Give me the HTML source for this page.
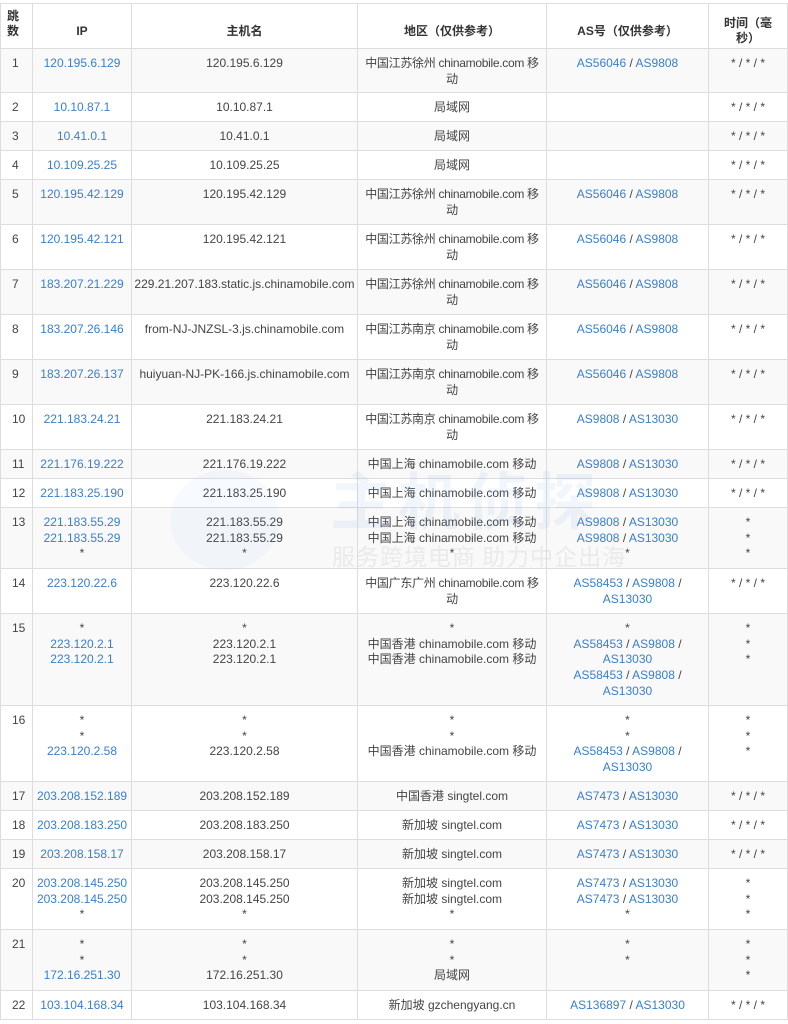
<!DOCTYPE html>
<html><head><meta charset="utf-8"><style>
body{margin:0;background:#fff;width:788px;height:1024px;overflow:hidden;position:relative;font-family:"Liberation Sans","Noto Sans CJK SC",sans-serif;}
table{position:absolute;left:0;top:3px;border-collapse:collapse;table-layout:fixed;width:787px;font-size:12px;color:#444;}
td,th{border:1px solid #ddd;vertical-align:top;text-align:center;padding:7px 0 0;line-height:15.7px;overflow:hidden;white-space:nowrap;}
th{vertical-align:bottom;padding:0 0 8px;font-weight:bold;color:#333;}
td:first-child,th:first-child{text-align:left;padding-left:11px;}
th:first-child{padding-left:6px;}
tr:nth-child(even) td{background:#f9f9f9;}
a{color:#3a7ecb;text-decoration:none}
.r{letter-spacing:-0.3px}
.wm{position:absolute;z-index:2;pointer-events:none;white-space:nowrap;font-family:"Noto Sans CJK SC",sans-serif;}
</style></head><body>
<table>
<colgroup><col style="width:32px"><col style="width:99px"><col style="width:226px"><col style="width:189px"><col style="width:162px"><col style="width:79px"></colgroup>
<tr style="height:45px"><th>跳<br>数</th><th>IP</th><th>主机名</th><th>地区（仅供参考）</th><th>AS号（仅供参考）</th><th style="padding-bottom:1px">时间（毫<br>秒）</th></tr>
<tr style="height:44px"><td>1</td><td><a>120.195.6.129</a></td><td>120.195.6.129</td><td class="r">中国江苏徐州 chinamobile.com 移<br>动</td><td><a>AS56046</a> / <a>AS9808</a></td><td>* / * / *</td></tr>
<tr style="height:29px"><td>2</td><td><a>10.10.87.1</a></td><td>10.10.87.1</td><td>局域网</td><td></td><td>* / * / *</td></tr>
<tr style="height:29px"><td>3</td><td><a>10.41.0.1</a></td><td>10.41.0.1</td><td>局域网</td><td></td><td>* / * / *</td></tr>
<tr style="height:29px"><td>4</td><td><a>10.109.25.25</a></td><td>10.109.25.25</td><td>局域网</td><td></td><td>* / * / *</td></tr>
<tr style="height:45px"><td>5</td><td><a>120.195.42.129</a></td><td>120.195.42.129</td><td class="r">中国江苏徐州 chinamobile.com 移<br>动</td><td><a>AS56046</a> / <a>AS9808</a></td><td>* / * / *</td></tr>
<tr style="height:45px"><td>6</td><td><a>120.195.42.121</a></td><td>120.195.42.121</td><td class="r">中国江苏徐州 chinamobile.com 移<br>动</td><td><a>AS56046</a> / <a>AS9808</a></td><td>* / * / *</td></tr>
<tr style="height:45px"><td>7</td><td><a>183.207.21.229</a></td><td>229.21.207.183.static.js.chinamobile.com</td><td class="r">中国江苏徐州 chinamobile.com 移<br>动</td><td><a>AS56046</a> / <a>AS9808</a></td><td>* / * / *</td></tr>
<tr style="height:45px"><td>8</td><td><a>183.207.26.146</a></td><td>from-NJ-JNZSL-3.js.chinamobile.com</td><td class="r">中国江苏南京 chinamobile.com 移<br>动</td><td><a>AS56046</a> / <a>AS9808</a></td><td>* / * / *</td></tr>
<tr style="height:45px"><td>9</td><td><a>183.207.26.137</a></td><td>huiyuan-NJ-PK-166.js.chinamobile.com</td><td class="r">中国江苏南京 chinamobile.com 移<br>动</td><td><a>AS56046</a> / <a>AS9808</a></td><td>* / * / *</td></tr>
<tr style="height:45px"><td>10</td><td><a>221.183.24.21</a></td><td>221.183.24.21</td><td class="r">中国江苏南京 chinamobile.com 移<br>动</td><td><a>AS9808</a> / <a>AS13030</a></td><td>* / * / *</td></tr>
<tr style="height:29px"><td>11</td><td><a>221.176.19.222</a></td><td>221.176.19.222</td><td>中国上海 chinamobile.com 移动</td><td><a>AS9808</a> / <a>AS13030</a></td><td>* / * / *</td></tr>
<tr style="height:29px"><td>12</td><td><a>221.183.25.190</a></td><td>221.183.25.190</td><td>中国上海 chinamobile.com 移动</td><td><a>AS9808</a> / <a>AS13030</a></td><td>* / * / *</td></tr>
<tr style="height:61px"><td>13</td><td><a>221.183.55.29</a><br><a>221.183.55.29</a><br>*</td><td>221.183.55.29<br>221.183.55.29<br>*</td><td>中国上海 chinamobile.com 移动<br>中国上海 chinamobile.com 移动<br>*</td><td><a>AS9808</a> / <a>AS13030</a><br><a>AS9808</a> / <a>AS13030</a><br>*</td><td>*<br>*<br>*</td></tr>
<tr style="height:45px"><td>14</td><td><a>223.120.22.6</a></td><td>223.120.22.6</td><td class="r">中国广东广州 chinamobile.com 移<br>动</td><td><a>AS58453</a> / <a>AS9808</a> /<br><a>AS13030</a></td><td>* / * / *</td></tr>
<tr style="height:92px"><td>15</td><td>*<br><a>223.120.2.1</a><br><a>223.120.2.1</a></td><td>*<br>223.120.2.1<br>223.120.2.1</td><td>*<br>中国香港 chinamobile.com 移动<br>中国香港 chinamobile.com 移动</td><td>*<br><a>AS58453</a> / <a>AS9808</a> /<br><a>AS13030</a><br><a>AS58453</a> / <a>AS9808</a> /<br><a>AS13030</a></td><td>*<br>*<br>*</td></tr>
<tr style="height:76px"><td>16</td><td>*<br>*<br><a>223.120.2.58</a></td><td>*<br>*<br>223.120.2.58</td><td>*<br>*<br>中国香港 chinamobile.com 移动</td><td>*<br>*<br><a>AS58453</a> / <a>AS9808</a> /<br><a>AS13030</a></td><td>*<br>*<br>*</td></tr>
<tr style="height:29px"><td>17</td><td><a>203.208.152.189</a></td><td>203.208.152.189</td><td>中国香港 singtel.com</td><td><a>AS7473</a> / <a>AS13030</a></td><td>* / * / *</td></tr>
<tr style="height:29px"><td>18</td><td><a>203.208.183.250</a></td><td>203.208.183.250</td><td>新加坡 singtel.com</td><td><a>AS7473</a> / <a>AS13030</a></td><td>* / * / *</td></tr>
<tr style="height:29px"><td>19</td><td><a>203.208.158.17</a></td><td>203.208.158.17</td><td>新加坡 singtel.com</td><td><a>AS7473</a> / <a>AS13030</a></td><td>* / * / *</td></tr>
<tr style="height:61px"><td>20</td><td><a>203.208.145.250</a><br><a>203.208.145.250</a><br>*</td><td>203.208.145.250<br>203.208.145.250<br>*</td><td>新加坡 singtel.com<br>新加坡 singtel.com<br>*</td><td><a>AS7473</a> / <a>AS13030</a><br><a>AS7473</a> / <a>AS13030</a><br>*</td><td>*<br>*<br>*</td></tr>
<tr style="height:61px"><td>21</td><td>*<br>*<br><a>172.16.251.30</a></td><td>*<br>*<br>172.16.251.30</td><td>*<br>*<br>局域网</td><td>*<br>*</td><td>*<br>*<br>*</td></tr>
<tr style="height:29px"><td>22</td><td><a>103.104.168.34</a></td><td>103.104.168.34</td><td>新加坡 gzchengyang.cn</td><td><a>AS136897</a> / <a>AS13030</a></td><td>* / * / *</td></tr>
</table>
<div class="wm" style="left:330px;top:452px;font-size:62px;font-weight:bold;color:rgba(120,170,230,0.10);letter-spacing:6px">主机侦探</div>
<div class="wm" style="left:332px;top:538px;font-size:23px;color:rgba(150,150,150,0.15);letter-spacing:1px">服务跨境电商 助力中企出海</div>
<div class="wm" style="left:170px;top:470px;width:110px;height:100px;border-radius:50%;background:rgba(120,170,230,0.06)"></div>
</body></html>
